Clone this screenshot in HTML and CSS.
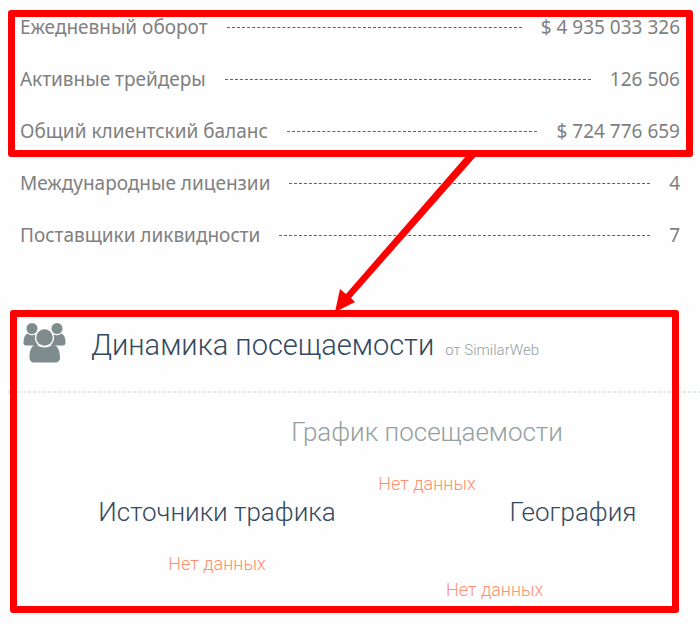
FILE: index.html
```html
<!DOCTYPE html>
<html lang="ru">
<head>
<meta charset="utf-8">
<title>Динамика посещаемости</title>
<link rel="stylesheet" href="styles.css">
</head>
<body>
<main class="page">
  <section class="stats">
    <dl class="group marked">
      <div class="row"><dt>Ежедневный оборот</dt><dd>$ 4 935 033 326</dd></div>
      <div class="row"><dt>Активные трейдеры</dt><dd>126 506</dd></div>
      <div class="row"><dt>Общий клиентский баланс</dt><dd>$ 724 776 659</dd></div>
    </dl>
    <dl class="group">
      <div class="row"><dt>Международные лицензии</dt><dd>4</dd></div>
      <div class="row"><dt>Поставщики ликвидности</dt><dd>7</dd></div>
    </dl>
    <svg class="arrow" width="150" height="160" viewBox="330 154 150 160" aria-hidden="true">
      <path d="M467 155H477L351 298L355 302L335 312L340 289L346 294Z" fill="#fe0000"/>
    </svg>
  </section>

  <section class="traffic">
    <header class="heading">
      <svg class="people" width="44" height="40" viewBox="0 0 44 40" aria-hidden="true">
        <g fill="#7f8c8d">
          <circle cx="9" cy="5.5" r="5.5"/>
          <circle cx="34" cy="5.5" r="5.5"/>
          <path d="M4.500 10.500C7 12.500 10 12.800 12.500 11.500C11 15.500 12.500 19.500 15.500 22.500H3C1.200 22.500.5 21.500.5 19.500C.5 15.500 1.500 12 4.500 10.500Z"/>
          <path d="M38.500 10.500C36 12.500 33 12.800 30.500 11.500C32 15.500 30.500 19.500 27.500 22.500H40C41.800 22.500 42.500 21.500 42.500 19.500C42.500 15.500 41.500 12 38.500 10.500Z"/>
          <circle cx="21.500" cy="14.500" r="8.300"/>
          <path d="M13.500 21.800C18 25.500 25 25.500 29.500 21.800C35 22 37 28.500 37 34.500C37 38 35 39.500 32 39.500H11.500C8.500 39.500 6.500 38 6.500 34.500C6.500 28.500 8 22 13.500 21.800Z"/>
        </g>
      </svg>
      <h1>Динамика посещаемости <small>от SimilarWeb</small></h1>
    </header>
    <div class="chart">
      <h2>График посещаемости</h2>
      <p class="empty">Нет данных</p>
    </div>
    <div class="columns">
      <div class="sources">
        <h2>Источники трафика</h2>
        <p class="empty">Нет данных</p>
      </div>
      <div class="geography">
        <h2>География</h2>
        <p class="empty">Нет данных</p>
      </div>
    </div>
  </section>
</main>
</body>
</html>
```

FILE: styles.css
```css
* {
  box-sizing: border-box;
}

body {
  margin: 0;
  background: #fefefe;
  font-family: Roboto, "Liberation Sans", sans-serif;
}

h1, h2, p, dl, dd {
  margin: 0;
}

.page {
  padding: 1px 0 17px;
}

.stats {
  position: relative;
  padding-bottom: 49px;
  color: #808080;
  font: 19px/24px "Noto Sans", "Open Sans", sans-serif;
}

.group {
  padding: 0 20px;
}

.marked,
.traffic {
  position: relative;
}

.marked::after,
.traffic::after {
  content: "";
  position: absolute;
  border: 7px solid #fe0000;
  border-radius: 3px;
  pointer-events: none;
}

.marked::after {
  inset: 9px 7px 0 8px;
}

.traffic::after {
  inset: 0 21px 0 10px;
}

.row {
  display: flex;
  align-items: center;
  gap: 19px;
  height: 52px;
}

.row::before {
  content: "";
  order: 1;
  flex: 1;
  border-top: 1px dashed #606060;
}

.row dd {
  order: 2;
}

.arrow {
  position: absolute;
  left: 330px;
  bottom: -4px;
  z-index: 1;
}

.heading {
  display: flex;
  gap: 24px;
  height: 83px;
  margin-left: 8px;
  padding: 13px 0 0 15px;
  background: repeating-linear-gradient(90deg, #e2eae9 0 3px, transparent 3px 5px) 0 100% / 100% 2px no-repeat;
}

h1, h2, .empty {
  font-weight: 300;
}

h1 {
  color: #34495e;
  font-size: 29px;
  line-height: 44px;
}

h1 small {
  margin-left: 4px;
  color: #95a0a1;
  font-size: 15px;
}

h2 {
  color: #34495e;
  font-size: 26px;
  line-height: 32px;
}

.empty {
  color: #ff8f70;
  font-size: 18px;
  line-height: 24px;
}

.chart {
  padding: 23px 0 0 154px;
  text-align: center;
}

.chart h2 {
  color: #95a0a1;
}

.chart .empty {
  margin-top: 24px;
}

.columns {
  display: grid;
  grid-template-columns: 418fr 254fr;
  column-gap: 20px;
  padding: 0 0 11px 8px;
  text-align: center;
}

.sources .empty {
  margin-top: 24px;
}

.geography .empty {
  margin-top: 50px;
  text-align: left;
}
```
